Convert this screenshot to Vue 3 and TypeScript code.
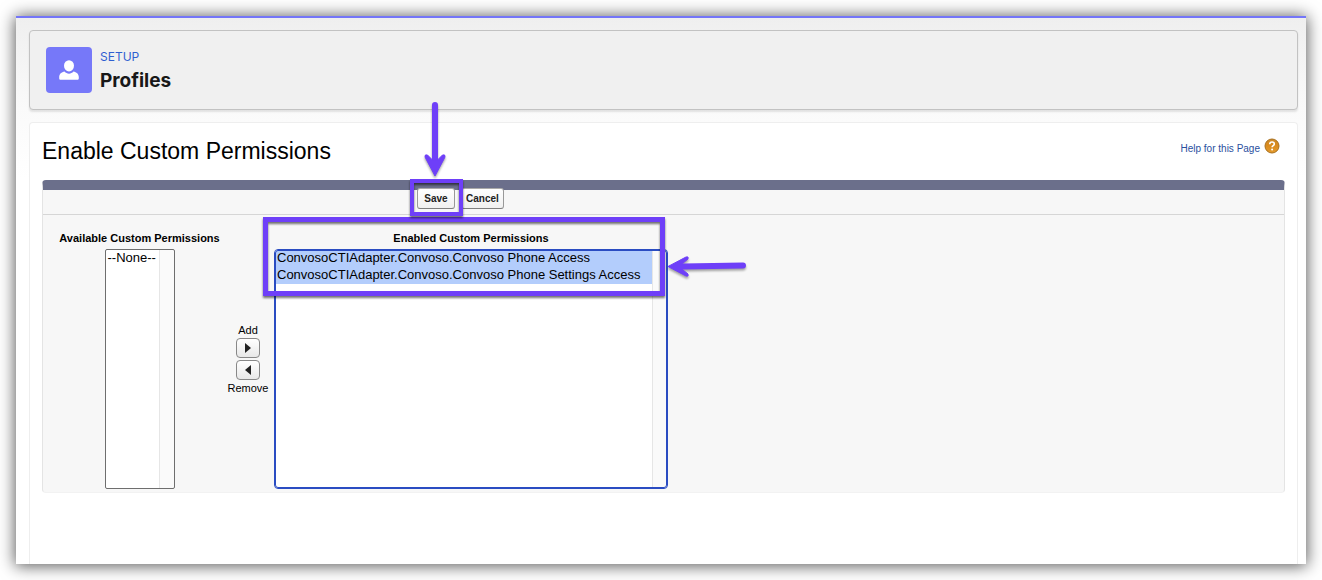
<script setup lang="ts">
import { ref } from 'vue'

const NONE = '--None--'
const available = ref<string[]>([])
const enabled = ref<string[]>([
  'ConvosoCTIAdapter.Convoso.Convoso Phone Access',
  'ConvosoCTIAdapter.Convoso.Convoso Phone Settings Access',
])
const pickedAvailable = ref<string[]>([])
const pickedEnabled = ref<string[]>([...enabled.value])

function add(): void {
  const moved = pickedAvailable.value.filter((p) => p !== NONE)
  enabled.value = [...enabled.value, ...moved]
  available.value = available.value.filter((p) => !moved.includes(p))
  pickedAvailable.value = []
}

function remove(): void {
  const moved = pickedEnabled.value.filter((p) => p !== NONE)
  available.value = [...available.value, ...moved]
  enabled.value = enabled.value.filter((p) => !moved.includes(p))
  pickedEnabled.value = []
}
</script>

<template>
  <div class="stage">
    <div class="window">
      <header class="page-header">
        <span class="badge">
          <svg viewBox="0 0 46 46" width="46" height="46" aria-hidden="true">
            <ellipse cx="23" cy="18.8" rx="5" ry="5.600" fill="#fff" />
            <path
              d="M18.500 24.600C19.800 26 21.300 26.700 23 26.700s3.200-.7 4.500-2.100c2.900.6 5.300 2.500 5.300 5.500v1.200c0 1-.6 1.500-1.500 1.500H14.700c-.9 0-1.500-.5-1.500-1.500v-1.200c0-3 2.400-4.900 5.300-5.500z"
              fill="#fff"
            />
          </svg>
        </span>
        <div class="heading">
          <span class="eyebrow">SETUP</span>
          <h1>Profiles</h1>
        </div>
      </header>

      <main class="card">
        <div class="title-row">
          <h2>Enable Custom Permissions</h2>
          <a class="help" href="#help">
            <span>Help for this Page</span>
            <svg viewBox="0 0 16 16" width="16" height="16" aria-hidden="true">
              <defs>
                <linearGradient id="amber" x1="0" y1="0" x2="0" y2="1">
                  <stop offset="0" stop-color="#c98a2c" />
                  <stop offset=".4" stop-color="#d98a1c" />
                  <stop offset="1" stop-color="#e39a2c" />
                </linearGradient>
              </defs>
              <circle cx="8" cy="8" r="7" fill="url(#amber)" stroke="#a8701f" />
              <path
                d="M5.700 6.200C5.800 4.700 6.700 4 8 4s2.300.8 2.300 2c0 1.600-2.200 1.700-2.200 3.300"
                fill="none"
                stroke="#fff"
                stroke-width="1.600"
              />
              <circle cx="8.100" cy="11.500" r="1" fill="#fff" />
            </svg>
          </a>
        </div>

        <form class="panel" @submit.prevent>
          <div class="actions">
            <span class="save-spot">
              <button type="submit" class="btn">Save</button>
              <span class="callout callout-save"></span>
              <svg class="arrow arrow-down" viewBox="0 0 30 84" width="30" height="84" aria-hidden="true">
                <path d="M15 8V66" stroke="#6e3ff8" stroke-width="6" stroke-linecap="round" />
                <path
                  d="M15 79L5 60Q4.500 57 7.500 58L12.500 63H17.500L22.500 58Q25.500 57 25 60Z"
                  fill="#6e3ff8"
                  stroke="#6e3ff8"
                  stroke-linejoin="round"
                />
              </svg>
            </span>
            <button type="button" class="btn">Cancel</button>
          </div>

          <div class="duel">
            <div class="column column-available">
              <label for="available">Available Custom Permissions</label>
              <select id="available" v-model="pickedAvailable" class="list" multiple>
                <option v-if="!available.length">{{ NONE }}</option>
                <option v-for="p in available" :key="p">{{ p }}</option>
              </select>
            </div>

            <div class="movers">
              <label for="add">Add</label>
              <button id="add" type="button" class="move" @click="add">
                <svg viewBox="0 0 6 10" width="6" height="10" aria-hidden="true">
                  <path d="M0 0L6 5L0 10Z" fill="#222" />
                </svg>
              </button>
              <button id="remove" type="button" class="move" @click="remove">
                <svg viewBox="0 0 6 10" width="6" height="10" aria-hidden="true">
                  <path d="M6 0L0 5L6 10Z" fill="#222" />
                </svg>
              </button>
              <label for="remove">Remove</label>
            </div>

            <div class="column">
              <label for="enabled">Enabled Custom Permissions</label>
              <select id="enabled" v-model="pickedEnabled" class="list active" multiple>
                <option v-if="!enabled.length">{{ NONE }}</option>
                <option v-for="p in enabled" :key="p">{{ p }}</option>
              </select>
              <span class="callout callout-list"></span>
              <svg class="arrow arrow-left" viewBox="0 0 88 30" width="88" height="30" aria-hidden="true">
                <path d="M18 15.500L78 14.500" stroke="#6e3ff8" stroke-width="6" stroke-linecap="round" />
                <path
                  d="M3 15.500L21 6Q24 5 23 8L17.500 12.500V18.500L23 23Q24 26 21 25Z"
                  fill="#6e3ff8"
                  stroke="#6e3ff8"
                  stroke-linejoin="round"
                />
              </svg>
            </div>
          </div>
        </form>
      </main>
    </div>
  </div>
</template>

<style>
body {
  background: #fff;
}
</style>

<style scoped>
* {
  box-sizing: border-box;
}
.stage {
  display: flex;
  min-height: 100vh;
  padding: 16px;
  overflow: hidden;
  font-family: "Liberation Sans", Arial, sans-serif;
  color: #000;
}
.window {
  flex: 1;
  display: flex;
  flex-direction: column;
  gap: 12px;
  padding: 12px 8px 0 13px;
  border-top: 2px solid #7476f8;
  background: linear-gradient(#efefef, #fafafa 90px, #fff 160px);
  box-shadow: 0 1px 15px 1px rgba(0, 0, 0, 0.65);
}
.page-header {
  display: flex;
  gap: 8px;
  padding: 16px;
  border: 1px solid #c2c2c2;
  border-radius: 4px;
  background: #f0f0f0;
  box-shadow: 0 2px 2px rgba(0, 0, 0, 0.1);
}
.badge {
  width: 46px;
  height: 46px;
  border-radius: 4px;
  background: #7678f9;
}
.badge svg {
  display: block;
}
.heading {
  height: 46px;
  font-family: Inter, sans-serif;
}
.eyebrow {
  display: block;
  font-size: 12px;
  line-height: 20px;
  color: #2f5fd0;
}
h1 {
  margin: 0;
  font-size: 19px;
  line-height: 28px;
  font-weight: 700;
  color: #181818;
}
.card {
  flex: 1;
  padding: 12px 12px 20px;
  border: 1px solid #eee;
  border-bottom: 0;
  border-radius: 4px 4px 0 0;
  background: #fff;
}
.title-row {
  display: flex;
  justify-content: space-between;
  height: 45px;
}
h2 {
  margin: 0;
  font-size: 23px;
  line-height: 32px;
  font-weight: 400;
}
.help {
  display: flex;
  align-items: center;
  align-self: flex-start;
  gap: 4px;
  margin-right: 5px;
  height: 26px;
  font-size: 10px;
  color: #2a4f9e;
  text-decoration: none;
}
.help svg {
  margin-bottom: 4px;
}
.panel {
  border: 1px solid #e4e4e4;
  border-top: 10px solid #6b6f8b;
  border-bottom-color: #f2f2f2;
  border-radius: 4px;
  background: #f7f7f7;
}
.actions {
  display: flex;
  gap: 6px;
  height: 25px;
  padding-left: 374px;
  border-bottom: 1px solid #d6d6d6;
}
.save-spot {
  position: relative;
  z-index: 1;
}
.btn {
  display: block;
  height: 21px;
  min-width: 38px;
  margin-top: -2px;
  padding: 0 4px;
  border: 1px solid #999;
  border-color: #aaa #999 #7f7f7f;
  border-radius: 3px;
  background: linear-gradient(#fff, #f0f0f0);
  font: bold 10px "Liberation Sans", Arial, sans-serif;
  color: #222;
}
.duel {
  display: flex;
  gap: 4px;
  padding: 16px 14px 3px;
}
.column {
  position: relative;
  display: flex;
  flex-direction: column;
  align-items: center;
  gap: 3px;
}
.column-available {
  min-width: 165px;
}
.column label {
  font-size: 11px;
  line-height: 15px;
  font-weight: 700;
}
.list {
  height: 240px;
  min-width: 70px;
  padding: 0 15px 0 0;
  border: 1px solid #6e6e6e;
  border-radius: 2px;
  outline: 0;
  overflow: hidden;
  background: linear-gradient(to left, #fafafa 14px, #e6e6e6 14px, #e6e6e6 15px, #fff 15px);
  font: 13px "Liberation Sans", Arial, sans-serif;
  color: #000;
}
.list option {
  min-height: 17px;
  padding: 0 2px;
  line-height: 17px;
}
.list.active {
  min-width: 394px;
  border-color: #2a4cc2;
  border-radius: 4px;
  outline: 1px solid #2a4cc2;
  outline-offset: -2px;
}
.list option:checked {
  background: linear-gradient(#b3cdfc, #b3cdfc);
  -webkit-text-fill-color: #000;
}
.movers {
  display: flex;
  flex-direction: column;
  align-items: center;
  gap: 2px;
  min-width: 44px;
  padding-top: 93px;
  font-size: 11px;
  line-height: 12px;
}
.move {
  display: flex;
  align-items: center;
  justify-content: center;
  width: 24px;
  height: 20px;
  padding: 0;
  border: 1px solid #888;
  border-radius: 4px;
  background: linear-gradient(#fff, #e8e8e8);
}
.callout {
  position: absolute;
  border: 4px solid #6e3ff8;
  pointer-events: none;
  filter: drop-shadow(0 2px 1px rgba(0, 0, 0, 0.55));
}
.callout-save {
  inset: -11px -8px -2px -7px;
}
.callout-list {
  top: -14px;
  left: -11px;
  right: 3px;
  height: 79px;
  border-width: 5px;
}
.arrow {
  position: absolute;
  fill: none;
  pointer-events: none;
  filter: drop-shadow(0 2px 1px rgba(0, 0, 0, 0.35));
}
.arrow-down {
  left: 3px;
  bottom: 33px;
}
.arrow-left {
  top: 20px;
  left: 100%;
  margin-left: -3px;
}
</style>
